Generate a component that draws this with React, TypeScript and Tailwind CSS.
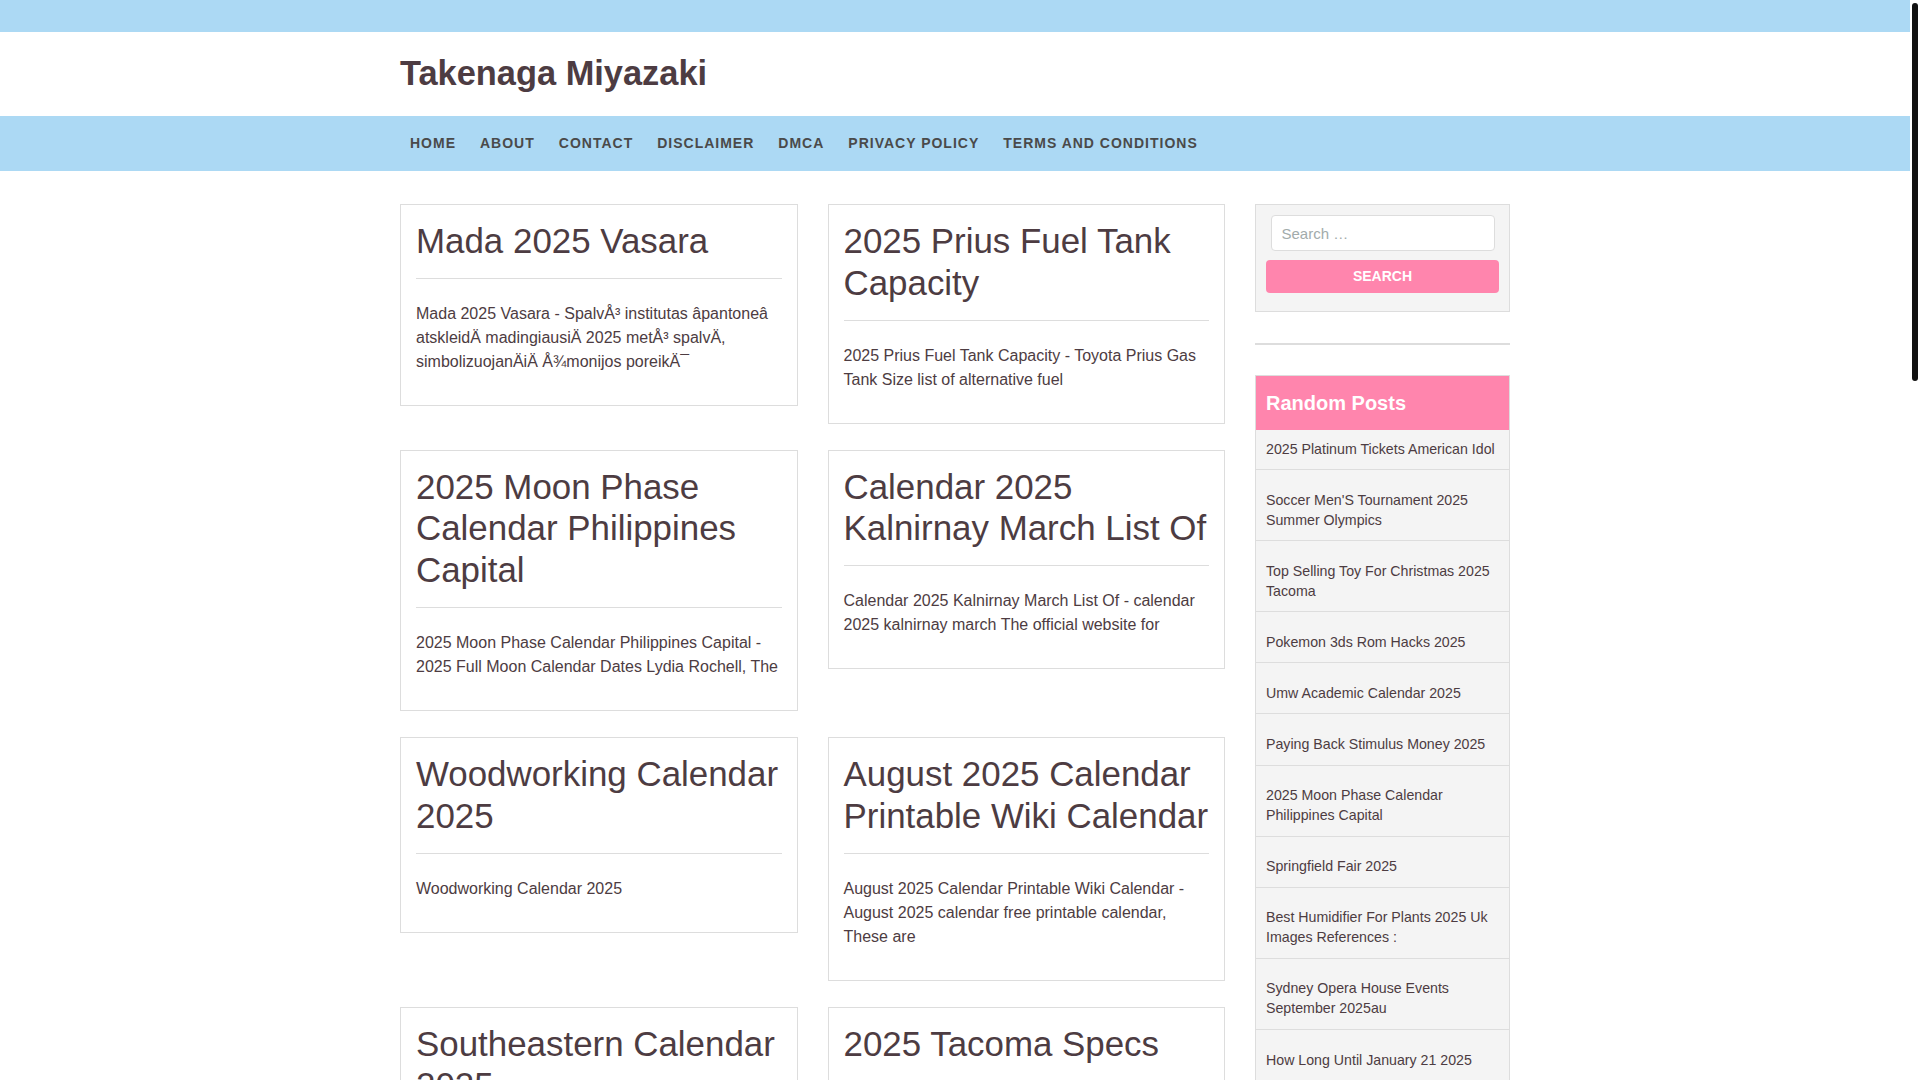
import { clsx } from "clsx";

const navItems = [
  "Home",
  "About",
  "Contact",
  "Disclaimer",
  "DMCA",
  "Privacy Policy",
  "Terms and Conditions",
];

const posts = [
  {
    title: "Mada 2025 Vasara",
    excerpt:
      "Mada 2025 Vasara - SpalvÅ³ institutas âpantoneâ atskleidÄ madingiausiÄ 2025 metÅ³ spalvÄ, simbolizuojanÄiÄ Å¾monijos poreikÄ¯",
  },
  {
    title: "2025 Prius Fuel Tank Capacity",
    excerpt:
      "2025 Prius Fuel Tank Capacity - Toyota Prius Gas Tank Size list of alternative fuel",
  },
  {
    title: "2025 Moon Phase Calendar Philippines Capital",
    excerpt:
      "2025 Moon Phase Calendar Philippines Capital - 2025 Full Moon Calendar Dates Lydia Rochell, The",
  },
  {
    title: "Calendar 2025 Kalnirnay March List Of",
    excerpt:
      "Calendar 2025 Kalnirnay March List Of - calendar 2025 kalnirnay march The official website for",
  },
  {
    title: "Woodworking Calendar 2025",
    excerpt: "Woodworking Calendar 2025",
  },
  {
    title: "August 2025 Calendar Printable Wiki Calendar",
    excerpt:
      "August 2025 Calendar Printable Wiki Calendar - August 2025 calendar free printable calendar, These are",
  },
  {
    title: "Southeastern Calendar 2025",
    excerpt:
      "Southeastern Calendar 2025 - Southeastern University Academic Calendar 2025 2026, The",
  },
  {
    title: "2025 Tacoma Specs",
    excerpt: "2025 Tacoma Specs - 2025 Toyota Tacoma Specs, Price, MPG & Reviews",
  },
  {
    title: "Soccer Men'S Tournament 2025 Summer Olympics",
    excerpt:
      "Soccer Men'S Tournament 2025 Summer Olympics - Football at the Summer Olympics men's tournament",
  },
  {
    title: "Top Selling Toy For Christmas 2025 Tacoma",
    excerpt:
      "Top Selling Toy For Christmas 2025 Tacoma - The best toys of the year, chosen by",
  },
  {
    title: "Pokemon 3ds Rom Hacks 2025",
    excerpt: "Pokemon 3ds Rom Hacks 2025 - Best Pokemon rom hacks list",
  },
  {
    title: "Umw Academic Calendar 2025",
    excerpt:
      "Umw Academic Calendar 2025 - University of Mary Washington academic calendar dates",
  },
  {
    title: "Paying Back Stimulus Money 2025",
    excerpt: "Paying Back Stimulus Money 2025",
  },
  {
    title: "Springfield Fair 2025",
    excerpt: "Springfield Fair 2025 - Springfield fair dates, tickets and events for",
  },
  {
    title: "Sydney Opera House Events September 2025au",
    excerpt:
      "Sydney Opera House Events September 2025au - What's on at Sydney Opera House this",
  },
  {
    title: "How Long Until January 21 2025",
    excerpt: "How Long Until January 21 2025 - Countdown to January 21, 2025",
  },
];

const randomPosts = [
  "2025 Platinum Tickets American Idol",
  "Soccer Men'S Tournament 2025 Summer Olympics",
  "Top Selling Toy For Christmas 2025 Tacoma",
  "Pokemon 3ds Rom Hacks 2025",
  "Umw Academic Calendar 2025",
  "Paying Back Stimulus Money 2025",
  "2025 Moon Phase Calendar Philippines Capital",
  "Springfield Fair 2025",
  "Best Humidifier For Plants 2025 Uk Images References :",
  "Sydney Opera House Events September 2025au",
  "How Long Until January 21 2025",
];

function PostCard({ title, excerpt }: { title: string; excerpt: string }) {
  return (
    <article className="border border-[#dddddd] bg-white p-[15px]">
      <h2 className="text-[34.9px] font-normal leading-[41.6px] text-[#4d3c42]">
        <a href="#">{title}</a>
      </h2>
      <hr className="mt-[16.5px] border-t border-[#dddddd]" />
      <p className="mb-[16px] mt-[23px] text-[16px] leading-6 text-[#4d3c42]">
        {excerpt}
      </p>
    </article>
  );
}

function Sidebar() {
  return (
    <aside className="w-[255px] shrink-0">
      <section className="border border-[#dddddd] bg-[#f4f4f4] px-[10px] pb-[18px] pt-[10px]">
        <input
          type="search"
          placeholder="Search …"
          className="mx-[4.5px] block h-[36.4px] w-[224px] rounded-[4px] border border-[#dddddd] bg-white px-[10px] text-[15px] text-[#4d3c42] outline-none placeholder:text-[#a2abab]"
        />
        <button
          type="button"
          className="mt-[8.3px] block h-[33px] w-full rounded-[4px] bg-[#ff85ad] text-[14px] font-bold uppercase text-white"
        >
          Search
        </button>
      </section>

      <div className="mt-[31px] h-[2px] bg-[#dddddd]" />

      <section className="mt-[30px] border border-[#dddddd] bg-[#f4f4f4]">
        <h3 className="bg-[#ff85ad] px-[10px] py-[15px] text-[20px] font-bold leading-[24px] text-white">
          Random Posts
        </h3>
        <ul>
          {randomPosts.map((t, i) => (
            <li
              key={t}
              className={clsx(
                "border-b border-[#dddddd] px-[10px] text-[14.2px] leading-5 text-[#4d3c42] last:border-b-0",
                i === 0 ? "pb-[9.8px] pt-[9.6px]" : "pb-[10.5px] pt-[19.6px]",
              )}
            >
              <a href="#">{t}</a>
            </li>
          ))}
        </ul>
      </section>
    </aside>
  );
}

export default function App() {
  return (
    <div className="flex h-screen bg-white font-['Liberation_Sans',Arial,sans-serif]">
      <div className="min-w-0 flex-1 overflow-y-auto [scrollbar-width:none]">
        <div className="h-8 bg-[#acd9f4]" />

        <header className="bg-white">
          <div className="mx-auto flex h-[84px] w-[1110px] items-center">
            <h1 className="text-[34.4px] font-bold text-[#4d3c42]">
              <a href="#">Takenaga Miyazaki</a>
            </h1>
          </div>
        </header>

        <nav className="bg-[#acd9f4]">
          <div className="mx-auto w-[1110px]">
            <ul className="-ml-[2px] flex h-[55px] items-center">
              {navItems.map((item) => (
                <li key={item}>
                  <a
                    href="#"
                    className="block px-3 text-[14px] font-bold uppercase tracking-[1px] text-[#4a4a4a]"
                  >
                    {item}
                  </a>
                </li>
              ))}
            </ul>
          </div>
        </nav>

        <div className="mx-auto mt-[33px] flex w-[1110px] items-start gap-[30px]">
          <main className="grid w-[825px] grid-cols-2 items-start gap-x-[30px] gap-y-[26px]">
            {posts.map((p) => (
              <PostCard key={p.title} title={p.title} excerpt={p.excerpt} />
            ))}
          </main>
          <Sidebar />
        </div>

        <footer className="mt-[40px] bg-[#acd9f4]">
          <div className="mx-auto w-[1110px] py-[20px] text-center text-[14px] text-[#4a4a4a]">
            Copyright © 2025 Takenaga Miyazaki
          </div>
        </footer>
      </div>

      {/* page scrollbar */}
      <div className="w-[10px] shrink-0 bg-white pt-[3px]">
        <div className="mx-auto h-[378px] w-[6px] rounded-full bg-[#111111]" />
      </div>
    </div>
  );
}
